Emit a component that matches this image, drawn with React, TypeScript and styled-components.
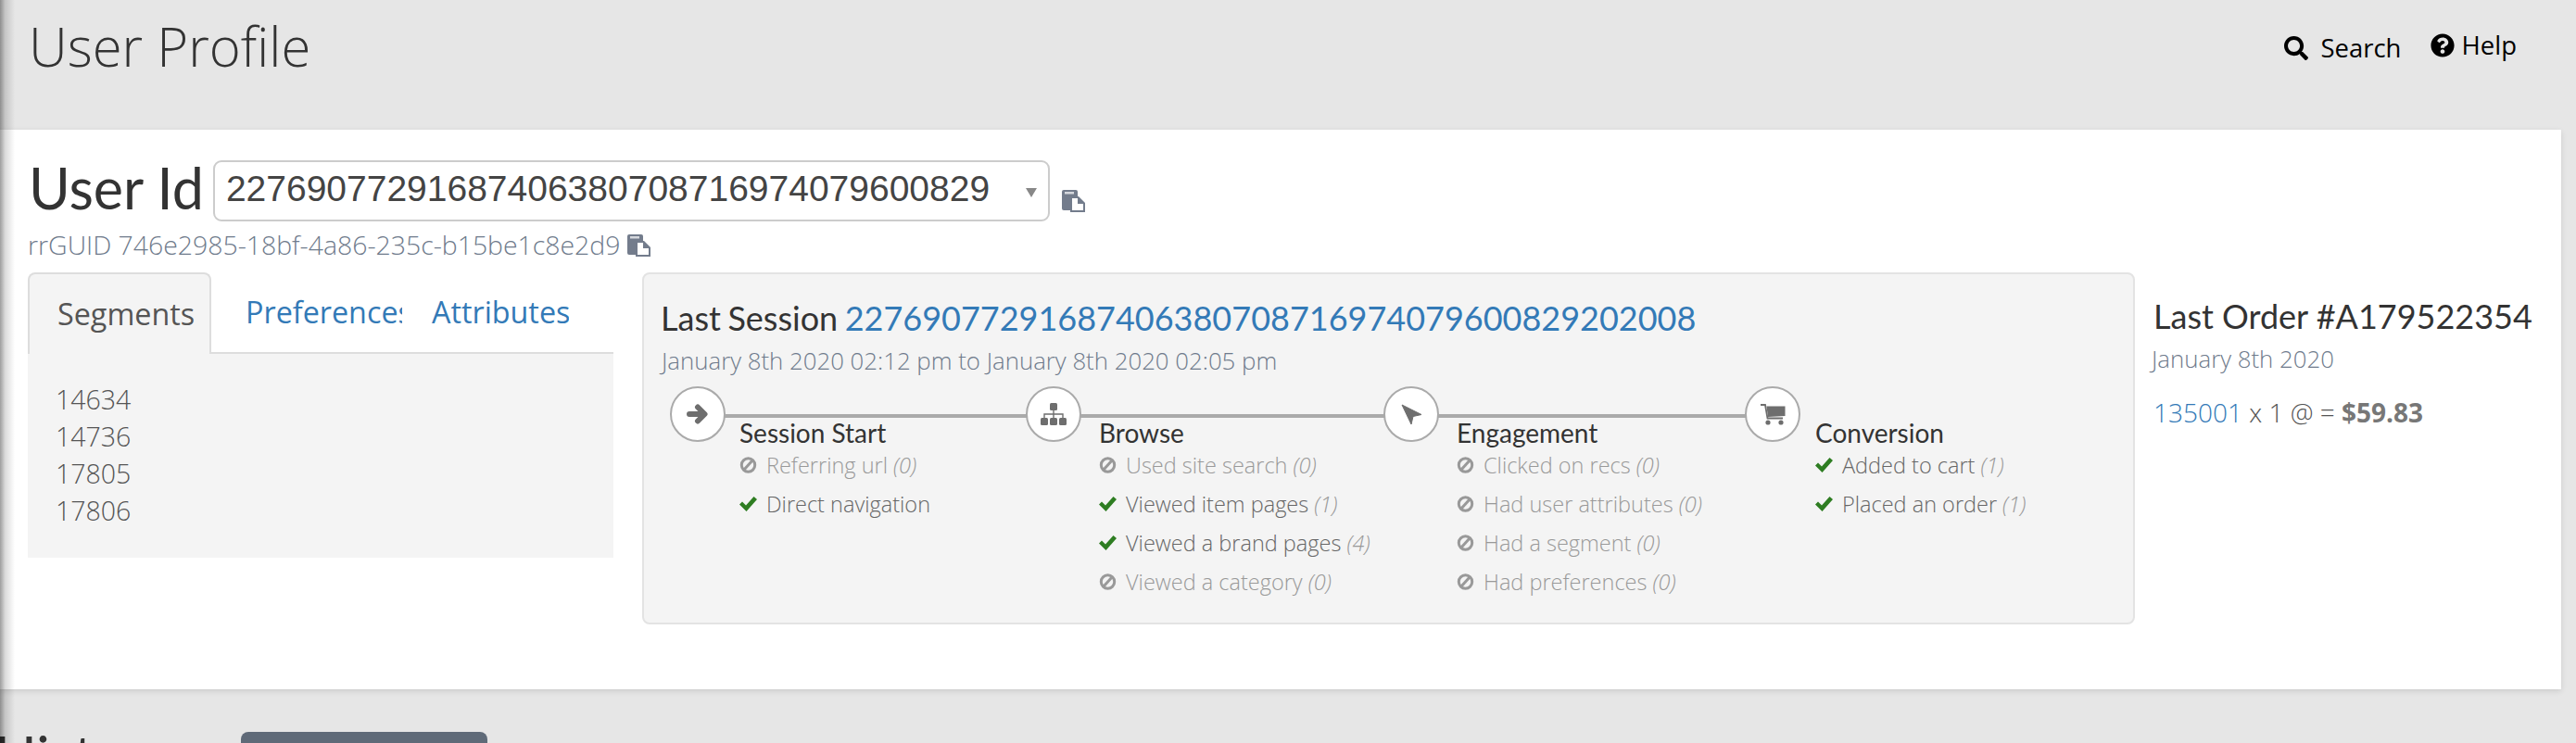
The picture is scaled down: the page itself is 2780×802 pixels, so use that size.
import React from "react";
import styled, { createGlobalStyle } from "styled-components";
import { FaSearch, FaQuestionCircle } from "react-icons/fa";

const Global = createGlobalStyle`
  html, body { margin: 0; padding: 0; background: #e6e6e6; height: 802px; overflow: hidden; }
  #root { height: 802px; }
  * { box-sizing: border-box; }
`;

const Page = styled.div`
  position: relative;
  height: 802px;
  overflow: hidden;
  font-family: "Open Sans", sans-serif;
  color: #777;
`;

const EdgeShade = styled.div`
  position: absolute;
  left: 0;
  top: 0;
  bottom: 0;
  width: 16px;
  background: linear-gradient(to right, rgba(0,0,0,0.38), rgba(0,0,0,0.14) 35%, rgba(0,0,0,0));
  z-index: 5;
`;

const TopBar = styled.header`
  height: 140px;
  padding: 0 64px 0 31px;
  display: flex;
  justify-content: space-between;
`;

const Title = styled.h1`
  margin: 18px 0 0;
  font-weight: 300;
  font-size: 58px;
  line-height: 64px;
  color: #333;
`;

const TopNav = styled.nav`
  display: flex;
  align-items: flex-start;
  gap: 31px;
  padding-top: 29px;
  color: #000;
  font-size: 27.5px;
  line-height: 40px;
`;

const NavItem = styled.a<{ $gap: number; $shift: number }>`
  display: flex;
  align-items: center;
  gap: ${(p) => p.$gap}px;
  margin-top: ${(p) => p.$shift}px;
  svg { font-size: 26px; }
`;

const Card = styled.main`
  margin-right: 16px;
  height: 604px;
  background: #fff;
  box-shadow: 0 2px 6px rgba(0,0,0,0.12);
  padding: 33px 22px 0 30px;
`;

const IdRow = styled.div`
  display: flex;
  align-items: center;
  height: 66px;
`;

const IdLabel = styled.h2`
  margin: 0 10px 6px 1px;
  font-family: Lato, sans-serif;
  font-weight: 400;
  font-size: 61px;
  line-height: 66px;
  color: #333;
`;

const Select = styled.div`
  position: relative;
  width: 903px;
  height: 66px;
  flex: none;
  border: 2px solid #ccc;
  border-radius: 9px;
  padding-left: 12px;
  font-family: "Liberation Sans", Arial, sans-serif;
  font-size: 39px;
  line-height: 58px;
  color: #444;
  &::after {
    content: "";
    position: absolute;
    right: 12px;
    top: 28px;
    border-left: 6px solid transparent;
    border-right: 6px solid transparent;
    border-top: 10px solid #888;
  }
`;

const CopyMark = styled.svg<{ $ml: number; $mt: number }>`
  width: 25px;
  height: 24px;
  margin-left: ${(p) => p.$ml}px;
  margin-top: ${(p) => p.$mt}px;
  flex: none;
`;

const GuidRow = styled.div`
  display: flex;
  align-items: center;
  height: 44px;
  margin-top: 3px;
  font-size: 28.4px;
  font-weight: 300;
  color: #6f7b8c;
`;

const Columns = styled.div`
  display: flex;
  align-items: flex-start;
  margin-top: 8px;
`;

const LeftCol = styled.section`
  width: 632px;
  flex: none;
  margin-right: 31px;
`;

const Tabs = styled.div`
  display: flex;
  height: 88px;
  border-bottom: 2px solid #ddd;
`;

const Tab = styled.a<{ $active?: boolean; $w: number; $pad: number }>`
  flex: none;
  width: ${(p) => p.$w}px;
  height: 88px;
  overflow: hidden;
  white-space: nowrap;
  font-size: 32.3px;
  line-height: 84px;
  padding-left: ${(p) => p.$pad}px;
  color: ${(p) => (p.$active ? "#555" : "#337ab7")};
  background: ${(p) => (p.$active ? "#f4f4f4" : "transparent")};
  border: ${(p) => (p.$active ? "2px solid #ddd" : "none")};
  border-bottom: none;
  border-radius: ${(p) => (p.$active ? "8px 8px 0 0" : "0")};
`;

const TabPanel = styled.div`
  height: 220px;
  background: #f4f4f4;
  padding: 29px 30px;
  font-size: 28.5px;
  font-weight: 300;
  line-height: 40px;
  color: #555;
`;

const SessionCard = styled.section`
  width: 1611px;
  height: 380px;
  flex: none;
  background: #f4f4f4;
  border: 2px solid #e3e3e3;
  border-radius: 8px;
  padding: 25px 18px 0;
`;

const SessionTitle = styled.h3`
  margin: 0;
  font-family: Lato, sans-serif;
  font-weight: 400;
  font-size: 36px;
  line-height: 44px;
  color: #333;
  white-space: nowrap;
  word-spacing: -1.7px;
  a { color: #337ab7; }
`;

const Muted = styled.div`
  font-size: 25.8px;
  font-weight: 300;
  line-height: 36px;
  color: #6f7b8c;
`;

const SessionDate = styled(Muted)`
  margin: 6px 0 0 1px;
`;

const Funnel = styled.div`
  position: relative;
  display: flex;
  margin: 10px 0 0 10px;
  &::before {
    content: "";
    position: absolute;
    left: 20px;
    width: 1170px;
    top: 30px;
    height: 4px;
    background: #aaa;
  }
`;

const Step = styled.div<{ $w: number }>`
  position: relative;
  width: ${(p) => p.$w}px;
  flex: none;
  display: flex;
`;

const Circle = styled.div`
  flex: none;
  width: 60px;
  height: 60px;
  border: 2px solid #aaa;
  border-radius: 50%;
  background: #fff;
  display: flex;
  align-items: center;
  justify-content: center;
`;

const StepIcon = styled.svg<{ $w: number; $h: number }>`
  width: ${(p) => p.$w}px;
  height: ${(p) => p.$h}px;
  color: #6e6e6e;
`;

const StepBody = styled.div<{ $ml: number }>`
  margin-left: ${(p) => p.$ml}px;
  padding-top: 36px;
`;

const StepName = styled.div`
  font-family: Lato, sans-serif;
  font-size: 28px;
  line-height: 28px;
  color: #333;
  white-space: nowrap;
`;

const Outcome = styled.div<{ $on: boolean }>`
  display: flex;
  align-items: center;
  height: 42px;
  white-space: nowrap;
  font-size: 23.5px;
  font-weight: 300;
  color: ${(p) => (p.$on ? "#666" : "#999")};
  em { margin-left: 6px; color: #999; }
`;

const OutcomeMark = styled.svg<{ $on: boolean }>`
  flex: none;
  width: 19px;
  height: 18px;
  margin-right: 10px;
  color: ${(p) => (p.$on ? "#2e7d22" : "#999")};
`;

const OrderCol = styled.aside`
  margin-left: 20px;
  padding-top: 25px;
`;

const OrderTitle = styled.h3`
  margin: 0;
  font-family: Lato, sans-serif;
  font-weight: 400;
  font-size: 36px;
  line-height: 44px;
  color: #333;
  white-space: nowrap;
`;

const OrderDate = styled(Muted)`
  margin: 6px 0 0 -2px;
`;

const OrderLine = styled.div`
  margin-top: 20px;
  font-size: 28px;
  font-weight: 300;
  line-height: 40px;
  color: #555;
  a { color: #337ab7; }
  strong { font-weight: 700; color: #777; }
`;

const NextRow = styled.div`
  display: flex;
  height: 58px;
  padding-top: 46px;
`;

const NextTitle = styled.h2`
  margin: -8px 0 0 -6px;
  width: 266px;
  font-family: Lato, sans-serif;
  font-weight: 400;
  font-size: 60px;
  line-height: 66px;
  color: #333;
`;

const NextButton = styled.div`
  width: 266px;
  height: 60px;
  background: #5f6a78;
  border-radius: 8px;
`;

const Copy = ({ ml, mt }: { ml: number; mt: number }) => (
  <CopyMark $ml={ml} $mt={mt} viewBox="0 0 25 24">
    <path d="M2 0h13a2 2 0 0 1 2 2v20H2a2 2 0 0 1-2-2V2a2 2 0 0 1 2-2z" fill="#737c8c" />
    <rect x="3" y="2" width="10" height="2.5" fill="#d5d8dd" />
    <path d="M9 7h9l7 7v10H9z" fill="#737c8c" />
    <path d="M11 9h6v6h6v7H11z" fill="#fff" />
  </CopyMark>
);

const ArrowIcon = () => (
  <StepIcon $w={24} $h={24} viewBox="0 0 24 24">
    <path d="M3 12H19M12 4.5L19.5 12L12 19.5" fill="none" stroke="currentColor" strokeWidth="6" strokeLinecap="round" strokeLinejoin="round" />
  </StepIcon>
);

const SitemapIcon = () => (
  <StepIcon $w={28} $h={24} viewBox="0 0 28 24">
    <g fill="currentColor">
      <rect x="10" y="0" width="8" height="8" rx="1.5" />
      <rect x="0" y="16" width="8" height="8" rx="1.5" />
      <rect x="10" y="16" width="8" height="8" rx="1.5" />
      <rect x="20" y="16" width="8" height="8" rx="1.5" />
    </g>
    <path d="M14 8v8M4 16v-4h20v4" fill="none" stroke="currentColor" strokeWidth="1.4" />
  </StepIcon>
);

const CursorIcon = () => (
  <StepIcon $w={23} $h={23} viewBox="0 0 23 23">
    <path d="M1 1L22 11.5L13 13.5L11 22Z" fill="currentColor" stroke="currentColor" strokeWidth="1" strokeLinejoin="round" />
  </StepIcon>
);

const CartIcon = () => (
  <StepIcon $w={27} $h={23} viewBox="0 0 27 23">
    <g fill="currentColor">
      <path d="M6.5 2.5H26.5V13L8 14Z" />
      <circle cx="8" cy="20" r="2.6" />
      <circle cx="22" cy="20" r="2.6" />
    </g>
    <path d="M0 1H5L7.5 15.5H24" fill="none" stroke="currentColor" strokeWidth="1.8" />
  </StepIcon>
);

const BanMark = () => (
  <OutcomeMark $on={false} viewBox="0 0 19 18">
    <circle cx="9.5" cy="9" r="7.2" fill="none" stroke="currentColor" strokeWidth="3" />
    <path d="M5 14L14 4" fill="none" stroke="currentColor" strokeWidth="3" />
  </OutcomeMark>
);

const CheckMark = () => (
  <OutcomeMark $on viewBox="0 0 19 18">
    <path d="M0 9.5L3 6.5L7 10.5L15.5 1L19 4L7.5 17Z" fill="currentColor" />
  </OutcomeMark>
);

type Item = { label: string; count?: number; on: boolean };
const steps: { name: string; icon: React.ReactNode; w: number; ml: number; items: Item[] }[] = [
  { name: "Session Start", icon: <ArrowIcon />, w: 384, ml: 15, items: [
    { label: "Referring url", count: 0, on: false },
    { label: "Direct navigation", on: true },
  ]},
  { name: "Browse", icon: <SitemapIcon />, w: 386, ml: 19, items: [
    { label: "Used site search", count: 0, on: false },
    { label: "Viewed item pages", count: 1, on: true },
    { label: "Viewed a brand pages", count: 4, on: true },
    { label: "Viewed a category", count: 0, on: false },
  ]},
  { name: "Engagement", icon: <CursorIcon />, w: 390, ml: 19, items: [
    { label: "Clicked on recs", count: 0, on: false },
    { label: "Had user attributes", count: 0, on: false },
    { label: "Had a segment", count: 0, on: false },
    { label: "Had preferences", count: 0, on: false },
  ]},
  { name: "Conversion", icon: <CartIcon />, w: 300, ml: 16, items: [
    { label: "Added to cart", count: 1, on: true },
    { label: "Placed an order", count: 1, on: true },
  ]},
];

export default function App() {
  return (
    <Page>
      <Global />
      <EdgeShade />
      <TopBar>
        <Title>User Profile</Title>
        <TopNav>
          <NavItem $gap={13} $shift={3}><FaSearch />Search</NavItem>
          <NavItem $gap={8} $shift={0}><FaQuestionCircle />Help</NavItem>
        </TopNav>
      </TopBar>
      <Card>
        <IdRow>
          <IdLabel>User Id</IdLabel>
          <Select>22769077291687406380708716974079600829</Select>
          <Copy ml={13} mt={22} />
        </IdRow>
        <GuidRow>rrGUID 746e2985-18bf-4a86-235c-b15be1c8e2d9<Copy ml={8} mt={2} /></GuidRow>
        <Columns>
          <LeftCol>
            <Tabs>
              <Tab $active $w={198} $pad={30}>Segments</Tab>
              <Tab $w={206} $pad={37}>Preferences</Tab>
              <Tab $w={180} $pad={32}>Attributes</Tab>
            </Tabs>
            <TabPanel>
              <div>14634</div>
              <div>14736</div>
              <div>17805</div>
              <div>17806</div>
            </TabPanel>
          </LeftCol>
          <SessionCard>
            <SessionTitle>Last Session <a>22769077291687406380708716974079600829202008</a></SessionTitle>
            <SessionDate>January 8th 2020 02:12 pm to January 8th 2020 02:05 pm</SessionDate>
            <Funnel>
              {steps.map((s) => (
                <Step key={s.name} $w={s.w}>
                  <Circle>{s.icon}</Circle>
                  <StepBody $ml={s.ml}>
                    <StepName>{s.name}</StepName>
                    {s.items.map((it) => (
                      <Outcome key={it.label} $on={it.on}>
                        {it.on ? <CheckMark /> : <BanMark />}
                        {it.label}
                        {it.count !== undefined && <em>({it.count})</em>}
                      </Outcome>
                    ))}
                  </StepBody>
                </Step>
              ))}
            </Funnel>
          </SessionCard>
          <OrderCol>
            <OrderTitle>Last Order #A179522354</OrderTitle>
            <OrderDate>January 8th 2020</OrderDate>
            <OrderLine><a>135001</a> x 1 @ = <strong>$59.83</strong></OrderLine>
          </OrderCol>
        </Columns>
      </Card>
      <NextRow>
        <NextTitle>History</NextTitle>
        <NextButton />
      </NextRow>
    </Page>
  );
}
